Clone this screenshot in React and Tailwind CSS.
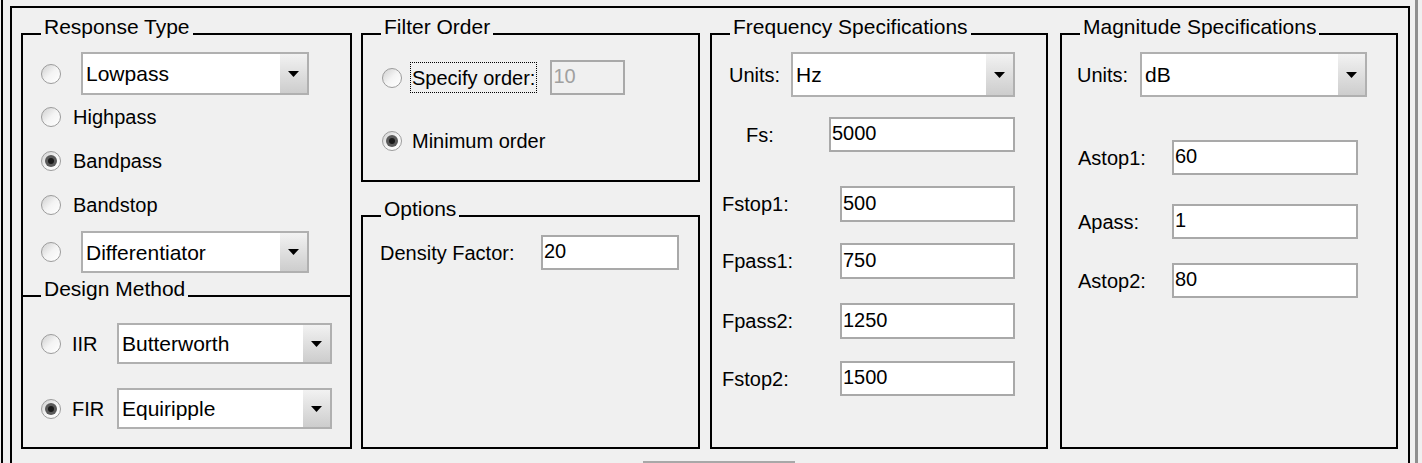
import React from "react";

function Radio({ checked }) {
  return (
    <div className="w-[20px] h-[20px] shrink-0 rounded-full border border-[#9c9c9c] bg-gradient-to-br from-[#cfcfcf] via-[#f4f4f4] to-[#ffffff] flex items-center justify-center">
      {checked && (
        <div className="w-[12px] h-[12px] rounded-full bg-[#5a5a5a] flex items-center justify-center">
          <div className="w-[6px] h-[6px] rounded-full bg-[#1a1a1a]" />
        </div>
      )}
    </div>
  );
}

function Select({ value, className }) {
  return (
    <div className={`flex shrink-0 border-2 border-[#b0b0b0] bg-white ${className}`}>
      <div className="flex-1 flex items-center pl-[3px] text-[21px] leading-none">{value}</div>
      <div className="w-[27px] bg-gradient-to-b from-[#f2f2f2] to-[#cdcdcd] flex items-center justify-center">
        <svg width="11" height="6" viewBox="0 0 11 6">
          <path d="M0 0H11L5.5 6Z" fill="#000" />
        </svg>
      </div>
    </div>
  );
}

function Input({ value, className, disabled }) {
  return (
    <div
      className={`flex shrink-0 items-center pl-[1px] pb-[3px] border-2 border-[#a9a9a9] text-[20px] leading-none ${
        disabled ? "bg-[#f0f0f0] text-[#a0a0a0]" : "bg-white text-black"
      } ${className}`}
    >
      {value}
    </div>
  );
}

function Title({ children }) {
  return (
    <span className="absolute left-[18px] top-[-19px] px-[3px] bg-[#f0f0f0] text-[21px] leading-[21px] whitespace-nowrap">
      {children}
    </span>
  );
}

function RadioRow({ label, checked, className }) {
  return (
    <div className={`flex items-center ${className}`}>
      <div className="ml-[18px]">
        <Radio checked={checked} />
      </div>
      <span className="ml-[12px] text-[20px] leading-none">{label}</span>
    </div>
  );
}

function LabelInput({ label, value, labelMl, labelW, inputW, className }) {
  return (
    <div className={`flex items-center ${className}`}>
      <span className={`${labelMl} ${labelW} shrink-0 text-[20px] leading-none`}>{label}</span>
      <Input value={value} className={`${inputW} h-full`} />
    </div>
  );
}

export default function App() {
  return (
    <div className="flex w-[1422px] h-[463px] overflow-hidden bg-[#f0f0f0] text-black font-['Liberation_Sans',Arial,sans-serif]">
      <div className="ml-[1px] w-[2px] shrink-0 bg-black" />
      <div className="ml-[7px] mt-[6px] w-[1400px] h-[480px] shrink-0 border-l-2 border-t-2 border-r-2 border-black pl-[9px] pt-[25px] flex flex-col">
        <div className="flex h-[416px]">
          {/* Column 1 */}
          <div className="w-[331px] shrink-0 flex flex-col">
            <div className="relative h-[262px] border-l-2 border-r-2 border-t-2 border-black pt-[17px]">
              <Title>Response Type</Title>
              <div className="flex items-center h-[43px]">
                <div className="ml-[18px]">
                  <Radio />
                </div>
                <Select value="Lowpass" className="ml-[20px] w-[228px] h-[43px]" />
              </div>
              <RadioRow label="Highpass" className="h-[44px]" />
              <RadioRow label="Bandpass" checked className="h-[44px]" />
              <RadioRow label="Bandstop" className="h-[44px]" />
              <div className="mt-[4px] flex items-center h-[42px]">
                <div className="ml-[18px]">
                  <Radio />
                </div>
                <Select value="Differentiator" className="ml-[20px] w-[228px] h-[42px]" />
              </div>
            </div>
            <div className="relative h-[154px] border-2 border-black pt-[26px]">
              <Title>Design Method</Title>
              <div className="flex items-center h-[41px]">
                <div className="ml-[18px]">
                  <Radio />
                </div>
                <span className="ml-[11px] w-[45px] text-[20px] leading-none">IIR</span>
                <Select value="Butterworth" className="w-[215px] h-[41px]" />
              </div>
              <div className="mt-[24px] flex items-center h-[41px]">
                <div className="ml-[18px]">
                  <Radio checked />
                </div>
                <span className="ml-[11px] w-[45px] text-[20px] leading-none">FIR</span>
                <Select value="Equiripple" className="w-[215px] h-[41px]" />
              </div>
            </div>
          </div>

          {/* Column 2 */}
          <div className="ml-[9px] w-[339px] shrink-0 flex flex-col">
            <div className="relative h-[149px] border-2 border-black pt-[25px]">
              <Title>Filter Order</Title>
              <div className="flex items-center h-[35px]">
                <div className="ml-[19px]">
                  <Radio />
                </div>
                <span className="ml-[8px] px-[1px] h-[31px] flex items-center border border-dotted border-black text-[20px] leading-none">
                  Specify order:
                </span>
                <Input value="10" disabled className="ml-[13px] w-[75px] h-[35px]" />
              </div>
              <div className="mt-[31px] flex items-center h-[30px]">
                <div className="ml-[19px]">
                  <Radio checked />
                </div>
                <span className="ml-[10px] text-[20px] leading-none">Minimum order</span>
              </div>
            </div>
            <div className="relative mt-[33px] h-[234px] border-2 border-black pt-[18px]">
              <Title>Options</Title>
              <LabelInput
                label="Density Factor:"
                value="20"
                labelMl="ml-[17px]"
                labelW="w-[161px]"
                inputW="w-[138px]"
                className="h-[35px]"
              />
            </div>
          </div>

          {/* Column 3 */}
          <div className="ml-[10px] w-[338px] shrink-0">
            <div className="relative h-[416px] border-2 border-black pt-[17px]">
              <Title>Frequency Specifications</Title>
              <div className="flex items-center h-[45px]">
                <span className="ml-[17px] w-[62px] shrink-0 text-[20px] leading-none">Units:</span>
                <Select value="Hz" className="w-[224px] h-[45px]" />
              </div>
              <LabelInput label="Fs:" value="5000" labelMl="ml-[34px]" labelW="w-[83px]" inputW="w-[186px]" className="mt-[20px] h-[35px]" />
              <LabelInput label="Fstop1:" value="500" labelMl="ml-[10px]" labelW="w-[118px]" inputW="w-[175px]" className="mt-[34px] h-[36px]" />
              <LabelInput label="Fpass1:" value="750" labelMl="ml-[10px]" labelW="w-[118px]" inputW="w-[175px]" className="mt-[21px] h-[36px]" />
              <LabelInput label="Fpass2:" value="1250" labelMl="ml-[10px]" labelW="w-[118px]" inputW="w-[175px]" className="mt-[24px] h-[36px]" />
              <LabelInput label="Fstop2:" value="1500" labelMl="ml-[10px]" labelW="w-[118px]" inputW="w-[175px]" className="mt-[22px] h-[35px]" />
            </div>
          </div>

          {/* Column 4 */}
          <div className="ml-[12px] w-[338px] shrink-0">
            <div className="relative h-[416px] border-2 border-black pt-[17px]">
              <Title>Magnitude Specifications</Title>
              <div className="flex items-center h-[45px]">
                <span className="ml-[15px] w-[63px] shrink-0 text-[20px] leading-none">Units:</span>
                <Select value="dB" className="w-[227px] h-[45px]" />
              </div>
              <LabelInput label="Astop1:" value="60" labelMl="ml-[16px]" labelW="w-[94px]" inputW="w-[186px]" className="mt-[43px] h-[35px]" />
              <LabelInput label="Apass:" value="1" labelMl="ml-[16px]" labelW="w-[94px]" inputW="w-[186px]" className="mt-[29px] h-[35px]" />
              <LabelInput label="Astop2:" value="80" labelMl="ml-[16px]" labelW="w-[94px]" inputW="w-[186px]" className="mt-[24px] h-[35px]" />
            </div>
          </div>
        </div>
        <div className="mt-[12px] ml-[622px] w-[152px] h-[10px] shrink-0 border-t-2 border-[#a8a8a8]" />
      </div>
      <div className="ml-[5px] w-[3px] shrink-0 bg-[#8f8f8f]" />
    </div>
  );
}
